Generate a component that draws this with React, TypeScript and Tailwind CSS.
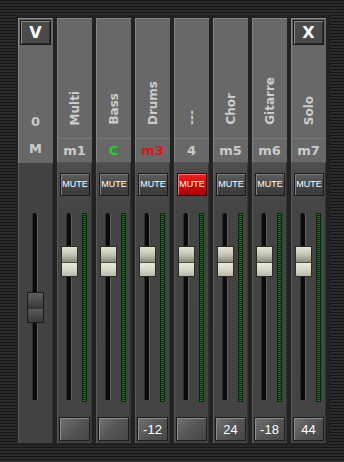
import React from 'react'

type Channel = {
  label: string
  name: string
  nameColor: string
  value: string
  muted?: boolean
  close?: boolean
}

const channels: Channel[] = [
  { label: 'Multi', name: 'm1', nameColor: 'text-[#cacaca]', value: '' },
  { label: 'Bass', name: 'C', nameColor: 'text-[#1fd61f]', value: '' },
  { label: 'Drums', name: 'm3', nameColor: 'text-[#e01414]', value: '-12' },
  { label: '---', name: '4', nameColor: 'text-[#cacaca]', value: '', muted: true },
  { label: 'Chor', name: 'm5', nameColor: 'text-[#cacaca]', value: '24' },
  { label: 'Gitarre', name: 'm6', nameColor: 'text-[#cacaca]', value: '-18' },
  { label: 'Solo', name: 'm7', nameColor: 'text-[#cacaca]', value: '44', close: true },
]

function TopButton({ children }: { children: React.ReactNode }) {
  return (
    <div className="mt-[2px] flex h-[25px] w-[31px] items-center justify-center border border-[#161616] bg-[#4a4a4a] text-[16px] font-bold leading-none text-white shadow-[inset_1px_1px_0_#8c8c8c,inset_-1px_-1px_0_#2c2c2c]">
      {children}
    </div>
  )
}

function VerticalLabel({ text }: { text: string }) {
  return (
    <span className="rotate-180 text-[12px] font-bold leading-none text-[#cccccc] [writing-mode:vertical-rl]">
      {text}
    </span>
  )
}

function Fader({ master = false, knobTop }: { master?: boolean; knobTop: number }) {
  return (
    <div className={`relative flex h-[189px] items-start ${master ? 'pl-[15px]' : 'pl-[10px]'}`}>
      <div className="h-[187px] w-[4px] rounded-t-[2px] bg-[#0a0a0a] shadow-[1px_0_0_#5f5f5f,-1px_0_0_#2c2c2c]" />
      {!master && (
        <div className="ml-[11px] h-[189px] w-[5px] border border-[#0a220a] bg-[image:repeating-linear-gradient(to_bottom,#237a23_0px,#237a23_1px,#0b260b_1px,#0b260b_2px)]" />
      )}
      <div
        className={`absolute h-[31px] w-[17px] border ${
          master
            ? 'left-[9px] border-[#1a1a1a] bg-[linear-gradient(to_bottom,#5e5e5e_0%,#4a4a4a_30%,#383838_50%,#1e1e1e_52%,#5a5a5a_56%,#474747_80%,#3a3a3a_100%)]'
            : 'left-[4px] border-[#2b2b24] bg-[linear-gradient(to_bottom,#e4e4d4_0%,#c6c6b6_25%,#8e8e7e_50%,#3c3c34_53%,#eaeada_57%,#d6d6c6_78%,#b8b8a8_100%)]'
        }`}
        style={{ top: knobTop }}
      />
    </div>
  )
}

function MasterStrip() {
  return (
    <div className="flex h-[425px] w-[35px] flex-col">
      <div className="flex h-[145px] flex-col items-center bg-[#686868] shadow-[inset_1px_1px_0_#858585]">
        <TopButton>V</TopButton>
        <span className="mt-auto text-[13px] font-bold leading-none text-[#cacaca]">0</span>
        <span className="mb-[8px] mt-[14px] text-[13px] font-bold leading-none text-[#cacaca]">M</span>
      </div>
      <div className="flex flex-1 flex-col bg-[#434343] shadow-[inset_1px_0_0_#585858,inset_-1px_0_0_#333333]">
        <div className="h-[50px]" />
        <Fader master knobTop={79} />
      </div>
    </div>
  )
}

function ChannelStrip({ ch }: { ch: Channel }) {
  return (
    <div className="flex h-[425px] w-[35px] flex-col">
      <div className="flex h-[145px] flex-col bg-[#686868] shadow-[inset_1px_1px_0_#858585]">
        <div className="flex h-[120px] flex-col items-center pb-[6px]">
          {ch.close && <TopButton>X</TopButton>}
          <div className="mt-auto">
            <VerticalLabel text={ch.label} />
          </div>
        </div>
        <div
          className={`flex h-[25px] items-center justify-center border-y border-t-[#7a7a7a] border-b-[#555555] text-[13px] font-bold leading-none ${ch.nameColor}`}
        >
          {ch.name}
        </div>
      </div>
      <div className="flex flex-1 flex-col bg-[linear-gradient(to_bottom,#4e4e4e,#444444_50px,#434343)] shadow-[inset_1px_0_0_#585858,inset_-1px_0_0_#333333]">
        <div className="h-[50px] pl-[3px] pt-[10px]">
          <div
            className={`flex h-[23px] w-[30px] items-center justify-center border font-['Liberation_Sans',sans-serif] text-[9px] leading-none text-white ${
              ch.muted
                ? 'border-[#3a0000] bg-[linear-gradient(to_bottom,#f42020,#c80606_60%,#b00000)] shadow-[inset_1px_1px_0_#ff7070]'
                : 'border-[#1a1a1a] bg-[linear-gradient(to_bottom,#5e5e5e,#444444_60%,#3a3a3a)] shadow-[inset_1px_1px_0_#7e7e7e]'
            }`}
          >
            MUTE
          </div>
        </div>
        <Fader knobTop={33} />
        <div className="ml-[2px] mt-[15px] flex h-[24px] w-[31px] items-center justify-center border border-[#1c1c1c] bg-[linear-gradient(135deg,#727272,#535353_55%,#474747)] font-['Liberation_Sans',sans-serif] text-[13px] leading-none text-white shadow-[inset_1px_1px_0_#8c8c8c]">
          {ch.value}
        </div>
      </div>
    </div>
  )
}

export default function App() {
  return (
    <div className="h-[462px] w-[344px] bg-[image:repeating-linear-gradient(to_bottom,#141414_0px,#141414_1px,#2c2c2c_1px,#2c2c2c_3px)] pl-[16px] pt-[15px] font-['DejaVu_Sans',sans-serif]">
      <div className="flex w-fit gap-[4px] bg-[#222222] pb-[3px] pl-[2px] pr-[4px] pt-[3px]">
        <MasterStrip />
        {channels.map((ch) => (
          <ChannelStrip key={ch.label} ch={ch} />
        ))}
      </div>
    </div>
  )
}
